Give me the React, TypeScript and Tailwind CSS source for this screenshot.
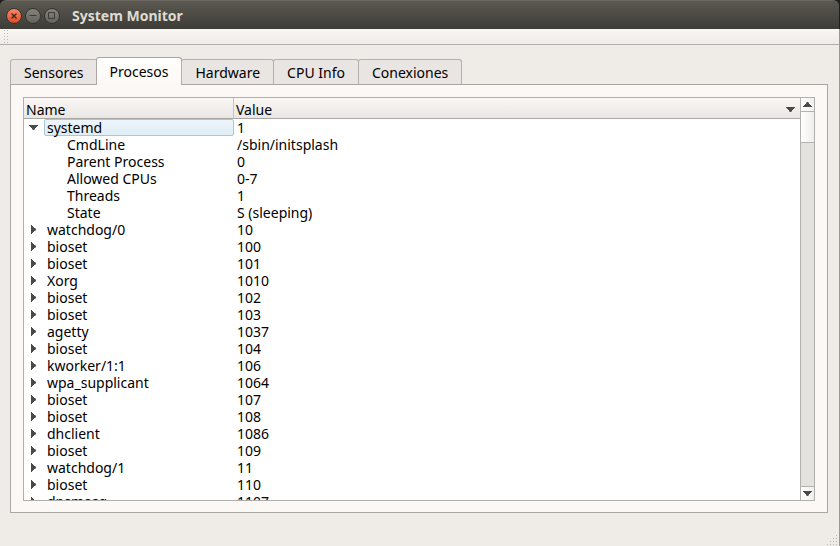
import { useState } from "react";

type Process = {
  name: string;
  pid: string;
  details?: { name: string; value: string }[];
};

const tabs = ["Sensores", "Procesos", "Hardware", "CPU Info", "Conexiones"];

const processes: Process[] = [
  {
    name: "systemd",
    pid: "1",
    details: [
      { name: "CmdLine", value: "/sbin/initsplash" },
      { name: "Parent Process", value: "0" },
      { name: "Allowed CPUs", value: "0-7" },
      { name: "Threads", value: "1" },
      { name: "State", value: "S (sleeping)" },
    ],
  },
  { name: "watchdog/0", pid: "10" },
  { name: "bioset", pid: "100" },
  { name: "bioset", pid: "101" },
  { name: "Xorg", pid: "1010" },
  { name: "bioset", pid: "102" },
  { name: "bioset", pid: "103" },
  { name: "agetty", pid: "1037" },
  { name: "bioset", pid: "104" },
  { name: "kworker/1:1", pid: "106" },
  { name: "wpa_supplicant", pid: "1064" },
  { name: "bioset", pid: "107" },
  { name: "bioset", pid: "108" },
  { name: "dhclient", pid: "1086" },
  { name: "bioset", pid: "109" },
  { name: "watchdog/1", pid: "11" },
  { name: "bioset", pid: "110" },
  { name: "dnsmasq", pid: "1107" },
];

function DownArrow({ className = "" }: { className?: string }) {
  return (
    <svg width="9" height="5" viewBox="0 0 9 5" fill="#4a4a4a" className={className} aria-hidden="true">
      <path d="M0 0h9v1H8v1H7v1H6v1H5.5v1h-2V4H3V3H2V2H1V1H0z" />
    </svg>
  );
}

function TitleBar() {
  const base = "flex size-4 items-center justify-center rounded-full border border-[#34332e]";
  return (
    <header className="mr-px flex h-[29px] shrink-0 items-center rounded-t-md border-t border-[#6a6860] bg-linear-to-b from-[#5b5950] to-[#3d3c37] pt-0.5 pl-1.5">
      <div className="flex gap-[3px]">
        <button type="button" aria-label="Close" className={`${base} bg-linear-to-b from-[#f4896a] to-[#df4b1b]`}>
          <svg width="6" height="6" viewBox="0 0 6 6" stroke="#3c2018" strokeWidth="1.2">
            <path d="M0.5 0.5l5 5M5.5 0.5l-5 5" />
          </svg>
        </button>
        <button type="button" aria-label="Minimize" className={`${base} bg-linear-to-b from-[#85837b] to-[#65635b]`}>
          <svg width="8" height="8" viewBox="0 0 8 8" stroke="#3c3b37">
            <path d="M0.5 3.5h7" />
          </svg>
        </button>
        <button type="button" aria-label="Maximize" className={`${base} bg-linear-to-b from-[#85837b] to-[#65635b]`}>
          <svg width="8" height="8" viewBox="0 0 8 8" fill="none" stroke="#3c3b37">
            <path d="M0.5 0.5h6v6h-6z" />
          </svg>
        </button>
      </div>
      <h1 className="ml-3 text-sm leading-5 font-bold text-[#dfdbd2]">System Monitor</h1>
    </header>
  );
}

function Tabs({ active, onSelect }: { active: string; onSelect: (tab: string) => void }) {
  return (
    <div role="tablist" className="z-10 -mb-px flex h-7 items-end">
      {tabs.map((tab) => (
        <button
          key={tab}
          type="button"
          role="tab"
          aria-selected={tab === active}
          onClick={() => onSelect(tab)}
          className={
            tab === active
              ? "-mr-px -ml-px h-7 rounded-t-[3px] border border-b-0 border-[#aaa7a3] bg-linear-to-b from-white to-[#fcf8f5] px-[13px] pb-px"
              : "-mr-px h-[26px] rounded-t-[3px] border border-[#b4b0ac] border-b-[#aaa7a3] bg-[#e9e5e2] px-[13px]"
          }
        >
          {tab}
        </button>
      ))}
    </div>
  );
}

function ProcessTable() {
  const [open, setOpen] = useState<string[]>(["1"]);
  const toggle = (pid: string) =>
    setOpen(open.includes(pid) ? open.filter((p) => p !== pid) : [...open, pid]);

  return (
    <div className="min-w-0 flex-1 overflow-hidden">
      <table className="w-full table-fixed border-separate border-spacing-0">
        <colgroup>
          <col className="w-[210px]" />
          <col />
        </colgroup>
        <thead>
          <tr className="h-[21px] bg-linear-to-b from-[#faf7f5] to-[#e8e6e4] text-left">
            <th className="border-r border-b border-r-[#c6c3c0] border-b-[#aaa7a3] p-0 pt-0.5 pl-0.5 font-normal">Name</th>
            <th className="border-b border-[#aaa7a3] p-0 pt-0.5 pr-[5px] pl-0.5 font-normal">
              <button type="button" className="flex w-full items-center justify-between">
                Value
                <DownArrow />
              </button>
            </th>
          </tr>
        </thead>
        <tbody>
          {processes.flatMap((process) => {
            const expanded = open.includes(process.pid);
            const selected = process.pid === "1";
            return [
              <tr key={process.pid} className="h-[17px]">
                <td className="p-0">
                  <div className="flex h-[17px]">
                    <button
                      type="button"
                      aria-label={`Toggle ${process.name}`}
                      aria-expanded={expanded}
                      onClick={() => toggle(process.pid)}
                      className="flex w-5 items-center justify-center pr-0.5"
                    >
                      {expanded && process.details ? (
                        <DownArrow />
                      ) : (
                        <svg width="5" height="9" viewBox="0 0 5 9" fill="#4a4a4a" aria-hidden="true">
                          <path d="M0 0h1v1h1v1h1v1h1v0.5h1v2H4V6H3v1H2v1H1v1H0z" />
                        </svg>
                      )}
                    </button>
                    <span
                      className={
                        selected
                          ? "flex-1 rounded-xs border border-[#a9c5d6] bg-linear-to-b from-[#edf6fb] to-[#dfedf5] pl-0.5 leading-[15px]"
                          : "flex-1 pl-[3px]"
                      }
                    >
                      {process.name}
                    </span>
                  </div>
                </td>
                <td className="p-0 pl-[3px]">{process.pid}</td>
              </tr>,
              ...(expanded && process.details ? process.details : []).map((detail) => (
                <tr key={`${process.pid}-${detail.name}`} className="h-[17px]">
                  <td className="p-0 pl-[43px]">{detail.name}</td>
                  <td className="p-0 pl-[3px]">{detail.value}</td>
                </tr>
              )),
            ];
          })}
        </tbody>
      </table>
    </div>
  );
}

function ScrollBar() {
  return (
    <div className="flex w-3.5 shrink-0 flex-col border-l border-[#b4b1ae] bg-[#e3e2df]">
      <button type="button" aria-label="Scroll up" className="flex h-3.5 items-center justify-center border-b border-[#b4b1ae] bg-linear-to-r from-white to-[#f0efed]">
        <DownArrow className="rotate-180" />
      </button>
      <div className="h-[31px] border-b border-[#b4b1ae] bg-linear-to-r from-white to-[#efeeeb]" />
      <button type="button" aria-label="Scroll down" className="mt-auto flex h-3.5 items-center justify-center border-t border-[#b4b1ae] bg-linear-to-r from-white to-[#f0efed]">
        <DownArrow />
      </button>
    </div>
  );
}

export default function App() {
  const [tab, setTab] = useState("Procesos");
  return (
    <div className="h-screen bg-[#1f1e1b]">
      <div className="flex h-full flex-col font-['Noto_Sans','Open_Sans',sans-serif] text-sm leading-[17px] text-black">
        <TitleBar />
        <div className="flex min-h-0 flex-1 flex-col border-r border-[#9a9894] bg-[#efebe7]">
          <div className="flex h-4 shrink-0 border-b border-[#b3afab] bg-linear-to-b from-[#f9f6f3] to-[#efebe7] pl-1">
            <svg width="5" height="15" aria-hidden="true">
              <path d="M0.5 1v14M3.5 1v14" stroke="#b8b4b0" strokeDasharray="1 2" />
            </svg>
          </div>
          <main className="flex min-h-0 flex-1 flex-col pt-3 pr-[11px] pl-2.5">
            <Tabs active={tab} onSelect={setTab} />
            <section role="tabpanel" aria-label={tab} className="flex min-h-0 flex-1 border border-[#aaa7a3] bg-[#fcf8f5] p-3 pb-[11px]">
              <div className="flex min-w-0 flex-1 border border-[#b1aeab] bg-white">
                <ProcessTable />
                <ScrollBar />
              </div>
            </section>
          </main>
          <footer className="flex h-[33px] shrink-0 items-end justify-end pr-px">
            <svg width="12" height="12" viewBox="0 0 12 12" fill="#b8b4b0" aria-hidden="true">
              <path d="M10 1h1v1h-1zM7 4h1v1H7zM10 4h1v1h-1zM4 7h1v1H4zM7 7h1v1H7zM10 7h1v1h-1zM1 10h1v1H1zM4 10h1v1H4zM7 10h1v1H7zM10 10h1v1h-1z" />
            </svg>
          </footer>
        </div>
      </div>
    </div>
  );
}
